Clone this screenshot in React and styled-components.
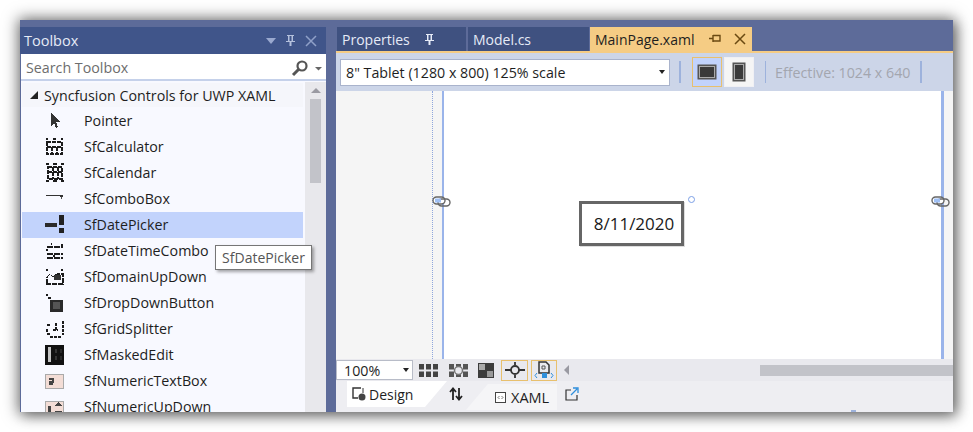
import React from "react";
import styled, { createGlobalStyle } from "styled-components";

const Global = createGlobalStyle`
  html, body { margin: 0; padding: 0; background: #fff; }
  body { font-family: "Open Sans", "Noto Sans", sans-serif; overflow: hidden; }
  #root { width: 973px; height: 432px; padding: 20px; box-sizing: border-box; }
`;
const Win = styled.div`
  width: 933px; height: 392px; display: flex; background: #5d6b99; overflow: hidden;
  box-shadow: 0 0 14px 2px rgba(0,0,0,.5), 4px 4px 12px rgba(0,0,0,.3);
`;
const Wrap = styled.div`position: relative; width: 933px; height: 392px;`;
const Left = styled.div`width: 306px; flex: none; display: flex; flex-direction: column; padding-top: 7px;`;
const TitleBar = styled.div`
  height: 27px; flex: none; background: #40558a; color: #e6ebf7; display: flex; align-items: center;
  padding: 0 9px 0 4px; font-size: 14.5px; justify-content: space-between;
`;
const TitleIcons = styled.div`display: flex; gap: 9px; align-items: center;`;
const Search = styled.div`
  height: 27px; flex: none; box-sizing: border-box; margin: 0 0 0 1px; background: #fff; border-bottom: 2px solid #c5d1ea; display: flex; align-items: center;
  justify-content: space-between; padding: 2px 3px 0 5px; font-size: 14.25px; color: #6d6d6d;
`;
const TreeArea = styled.div`flex: 1; min-height: 0; display: flex; background: #f8f9ff; margin-left: 1px; overflow: hidden; padding-top: 1px;`;
const Tree = styled.div`flex: 1; min-width: 0; padding: 1px 2px 0 1px; overflow: hidden;`;
const Header = styled.div`
  height: 24px; display: flex; align-items: center; background: #f5f6fb; font-size: 14.25px; color: #1e1e1e; padding-left: 8px; gap: 6px; margin-bottom: 1px;
`;
const Row = styled.div`
  height: 26px; box-sizing: border-box; padding-bottom: 1px; flex: none; display: flex; align-items: center; font-size: 14.25px; color: #1e1e1e;
  background: ${p => (p.$selected ? "#c2d3fc" : "transparent")};
`;
const RowIcon = styled.div`width: 62px; flex: none; display: flex; padding-left: 23px; box-sizing: border-box;`;
const Scroll = styled.div`width: 21px; flex: none; background: #e8e8ec; display: flex; flex-direction: column; align-items: center; padding-top: 6px;`;
const ScrollUp = styled.div`width:0; height:0; border-left: 5.5px solid transparent; border-right: 5.5px solid transparent; border-bottom: 5px solid #9a9aa2;`;
const ScrollThumb = styled.div`width: 11px; height: 84px; margin-top: 6px; background: #c2c3c9;`;
const Gap = styled.div`width: 10px; flex: none;`;
const Right = styled.div`flex: 1; min-width: 0; display: flex; flex-direction: column; padding-top: 7px;`;
const Tabs = styled.div`height: 24px; flex: none; display: flex; gap: 2px; padding-left: 1px;`;
const Tab = styled.div`
  width: ${p => p.$w}px; flex: none; box-sizing: border-box; display: flex; align-items: center; gap: 14px; font-size: 14px; padding-left: 5px;
  background: ${p => (p.$active ? "#f5cc84" : "#3f5180")}; color: ${p => (p.$active ? "#1e1e1e" : "#e6ebf7")};
  margin-right: ${p => (p.$tight ? "-1px" : "0")};
`;
const TabIcons = styled.div`display: flex; align-items: center; gap: 12px;`;
const Accent = styled.div`height: 2px; flex: none; background: #f5cc84;`;
const Toolbar = styled.div`
  height: 38px; flex: none; background: #ccd5e8; display: flex; align-items: center; padding-left: 4px; box-sizing: border-box;
`;
const Combo = styled.div`
  width: 330px; height: 27px; box-sizing: border-box; background: #fff; border: 1px solid #a9b3cc; display: flex; align-items: center; justify-content: space-between;
  padding: 0 4px 0 5px; font-size: 14.25px; color: #1e1e1e; flex: none;
`;
const Arrow = styled.span`width:0; height:0; border-left: 3.5px solid transparent; border-right: 3.5px solid transparent; border-top: 4px solid #222; display: inline-block;`;
const Sep = styled.div`width: 1.5px; height: 22px; background: #9db2dc; flex: none; margin: ${p => p.$m};`;
const Toggle = styled.div`
  width: 30px; height: 30px; box-sizing: border-box; flex: none; display: flex; align-items: center; justify-content: center; margin-right: ${p => p.$mr || 0}px;
  background: ${p => (p.$on ? "#c2d3fc" : "#f5f5f5")}; border: 1px solid ${p => (p.$on ? "#e8c06e" : "#f0f0f4")};
`;
const Effective = styled.div`font-size: 14.25px; color: #a3a6af; white-space: nowrap; flex: none; width: 145px;`;
const Canvas = styled.div`flex: 1; min-height: 0; display: flex; background: #f5f5f5; position: relative;`;
const Margin = styled.div`width: 96px; flex: none; border-right: 1px dotted #8fa6dc;`;
const Page = styled.div`
  width: 497px; margin-left: 9px; flex: none; background: #fff; border-left: 2px solid #9ab4ea; border-right: 3px solid #9ab4ea; box-sizing: content-box;
`;
const DateBox = styled.div`
  position: absolute; left: 243px; top: 110px; width: 105px; height: 45px; box-sizing: border-box; border: 3px solid #666; background: #fff;
  display: flex; align-items: center; justify-content: center; padding-left: 5px; font-size: 17px; color: #1a1a1a; box-shadow: 1px 1px 0 #ddd;
`;
const Handle = styled.div`position: absolute; left: 352px; top: 105px; width: 7px; height: 7px; box-sizing: border-box; border: 1.5px solid #7b9fe6; border-radius: 50%; background: #fff;`;
const Link = styled.svg`position: absolute; top: 103px; left: ${p => p.$x}px;`;
const ZoomBar = styled.div`height: 22px; flex: none; background: #e9e9ee; display: flex; align-items: center; position: relative;`;
const ZoomCombo = styled.div`
  width: 77px; height: 20px; flex: none; box-sizing: border-box; background: #fff; border: 1px solid #b8bcc8; display: flex; align-items: center; justify-content: space-between; padding: 0 3px 0 7px; font-size: 14.25px; color: #1e1e1e;
`;
const ToolIcon = styled.div`
  width: ${p => p.$w || 30}px; height: 21px; box-sizing: border-box; flex: none; display: flex; align-items: center; justify-content: center;
  border: ${p => (p.$on ? "1px solid #e8c06e" : "none")}; margin-right: ${p => p.$mr || 0}px;
`;
const HScroll = styled.div`flex: 1; min-width: 0; display: flex; align-items: center; padding-left: 7px;`;
const HArrow = styled.div`width:0; height:0; border-top: 5px solid transparent; border-bottom: 5px solid transparent; border-right: 5px solid #9a9aa2; flex: none;`;
const HThumb = styled.div`height: 11px; width: 193px; background: #c2c3c9; margin-left: auto;`;
const ViewBar = styled.div`height: 31px; flex: none; background: #eeeef2; display: flex; position: relative; padding-left: 11px;`;
const ViewTabA = styled.div`
  width: 100px; height: 26px; background: #fff; flex: none; display: flex; align-items: center; gap: 3px; padding-left: 5px; box-sizing: border-box; font-size: 14px; color: #1e1e1e;
  clip-path: polygon(0 0, 100% 0, 78% 100%, 0 100%);
`;
const SwapIcon = styled.div`width: 22px; flex: none; margin-left: -2px; height: 26px; display: flex; align-items: center; justify-content: center;`;
const ViewTabB = styled.div`
  width: 91px; height: 26px; margin-top: 3px; margin-left: -1px; background: #f5f5f7; flex: none; display: flex; align-items: center; gap: 5px; padding-left: 29px; box-sizing: border-box; font-size: 14.5px; color: #1e1e1e;
  clip-path: polygon(24% 0, 100% 0, 100% 100%, 0 100%);
`;
const Popout = styled.div`margin-left: 8px; height: 26px; display: flex; align-items: center;`;
const Tick = styled.div`position: absolute; left: 515px; bottom: 0; width: 5px; height: 2px; background: #9db2dc;`;
const Tip = styled.div`
  position: absolute; left: 195px; top: 225px; height: 25px; width: 97px; box-sizing: border-box; background: #fff; border: 1px solid #767676; font-size: 14px; color: #555;
  display: flex; align-items: center; justify-content: center; box-shadow: 2px 2px 3px rgba(0,0,0,.35);
`;

const I = ({ children, w = 20, h = 20 }) => <svg width={w} height={h} viewBox={`0 0 ${w} ${h}`} shapeRendering="crispEdges">{children}</svg>;
const k = "#1c1c1c";
const icons = {
  Pointer: <I><path d="M6 2l0 13 3-3 2 5 2-1-2-5 4 0z" fill="#333" /></I>,
  SfCalculator: <I><path d="M1 2h2M8 2h3M16 2h2" stroke={k} strokeWidth="1.5" /><path d="M2 5h15v12H2zM2 10h15M7 10v7M12 10v7" stroke={k} strokeWidth="1.5" strokeDasharray="4 1" fill="none" /></I>,
  SfCalendar: <I><path d="M1 1h3M8 1h4M16 1h3M1 18h3M8 18h4M16 18h3" stroke={k} strokeWidth="1.5" /><path d="M3 4h14v12H3zM3 9h14M8 4v12M13 4v12" stroke={k} strokeWidth="1.5" strokeDasharray="4 1" fill="none" /></I>,
  SfComboBox: <I><path d="M1 6h14" stroke="#333" /><rect x="15" y="6" width="3" height="2" fill="#333" /><rect x="16" y="8" width="1" height="2" fill="#555" /></I>,
  SfDatePicker: <I><rect x="0" y="8" width="12" height="4" fill="#2a2a2a" /><rect x="14" y="0" width="5" height="10" fill="#222" /><rect x="14" y="13" width="5" height="5" fill="#222" /></I>,
  SfDateTimeCombo: <I><path d="M6 3h1M17 3v3M2 6h16M2 8v2M2 13h16M2 17h16M8 15h2" stroke={k} strokeWidth="1.3" strokeDasharray="6 1" fill="none" /></I>,
  SfDomainUpDown: <I><path d="M1 3h2M16 3h2M2 17V10l3-3 3 3 4-3h6v10H2z" stroke={k} strokeWidth="1.3" fill="none" strokeDasharray="5 1" /><rect x="9" y="8" width="7" height="5" fill="#333" /></I>,
  SfDropDownButton: <I><path d="M1 2h2M3 5h3" stroke={k} strokeWidth="1.4" /><rect x="5" y="7" width="13" height="12" fill="#2a2a2a" /><rect x="8" y="9" width="7" height="7" fill="#555" /></I>,
  SfGridSplitter: <I><path d="M2 6h3M2 10v3M2 15h3M5 18h12M17 3h1v13M8 11h5M11 4v7" stroke={k} strokeWidth="1.3" strokeDasharray="3 1" fill="none" /></I>,
  SfMaskedEdit: <I><rect x="0" y="0" width="19" height="20" fill="#111" /><rect x="3" y="2" width="3" height="15" fill="#c4c4c4" /><rect x="10" y="4" width="2" height="4" fill="#333" /><rect x="10" y="11" width="2" height="4" fill="#333" /><rect x="15" y="4" width="2" height="4" fill="#2a2a2a" /><rect x="15" y="11" width="2" height="4" fill="#2a2a2a" /></I>,
  SfNumericTextBox: <I><rect x="0.5" y="3.5" width="18" height="14" fill="#f3ddd6" stroke="#aaa" /><path d="M4 8h4v3H5v2h3" stroke="#444" strokeWidth="1.4" fill="none" /></I>,
  SfNumericUpDown: <I><rect x="0.5" y="4.5" width="18" height="16" fill="#f3ddd6" stroke="#aaa" /><rect x="3" y="9" width="3" height="8" fill="#444" /><path d="M9 9l4-4 5 4zM9 14l4 4 5-4z" fill="#444" /></I>,
};
const rows = Object.keys(icons);

const Pin = ({ c = "#e6ebf7" }) => <svg width="11" height="13" viewBox="0 0 11 13"><path d="M2 1h7v1H8v5h2v1H6.5v4h-2V8H1V7h2V2H2zM4.5 2v5h2V2z" fill={c} /></svg>;
const PinSide = () => <svg width="14" height="12" viewBox="0 0 14 12"><path d="M1 5.5h4M5 2v7M5 2.5h7v5.5H5" stroke="#6b4a12" strokeWidth="1.4" fill="none" /></svg>;
const X = ({ c, s = 12 }) => <svg width={s} height={s} viewBox="0 0 12 12"><path d="M1 1l10 10M11 1L1 11" stroke={c} strokeWidth="1.5" /></svg>;
const LinkShape = ({ x }) => (
  <Link $x={x} width="20" height="14" viewBox="0 0 20 14">
    <rect x="1" y="3" width="12" height="7" rx="3.5" fill="#fff" stroke="#666" strokeWidth="1.4" />
    <rect x="6" y="5" width="12" height="7" rx="3.5" fill="none" stroke="#666" strokeWidth="1.4" />
    <rect x="3" y="4.5" width="6" height="4" fill="#9fc0f5" />
  </Link>
);

export default function App() {
  return (
    <>
      <Global />
      <Wrap>
        <Win>
          <Left>
            <TitleBar>
              Toolbox
              <TitleIcons>
                <svg width="10" height="6" viewBox="0 0 10 6"><path d="M0 0h10L5 6z" fill="#9aa9cf" /></svg>
                <Pin c="#b4c0dc" />
                <X c="#8fa0c8" />
              </TitleIcons>
            </TitleBar>
            <Search>
              Search Toolbox
              <svg width="32" height="18" viewBox="0 0 32 18"><circle cx="11" cy="7" r="4.5" fill="none" stroke="#555" strokeWidth="2.2" /><path d="M7.5 10.5l-5.5 5.5" stroke="#555" strokeWidth="3" /><path d="M24 8h7l-3.5 3.5z" fill="#666" /></svg>
            </Search>
            <TreeArea>
              <Tree>
                <Header>
                  <svg width="8" height="8" viewBox="0 0 8 8"><path d="M8 0v8H0z" fill="#222" /></svg>
                  Syncfusion Controls for UWP XAML
                </Header>
                {rows.map(n => (
                  <Row key={n} $selected={n === "SfDatePicker"}>
                    <RowIcon>{icons[n]}</RowIcon>
                    {n}
                  </Row>
                ))}
              </Tree>
              <Scroll><ScrollUp /><ScrollThumb /></Scroll>
            </TreeArea>
          </Left>
          <Gap />
          <Right>
            <Tabs>
              <Tab $w={129}>Properties <Pin c="#e6ebf7" /></Tab>
              <Tab $w={121} $tight>Model.cs</Tab>
              <Tab $w={162} $active>
                MainPage.xaml
                <TabIcons><PinSide /><X c="#6b4a12" /></TabIcons>
              </Tab>
            </Tabs>
            <Accent />
            <Toolbar>
              <Combo>8" Tablet (1280 x 800) 125% scale<Arrow /></Combo>
              <Sep $m="0 11px 0 9px" />
              <Toggle $on $mr={2}><svg width="20" height="16" viewBox="0 0 20 16"><rect x="0.5" y="0.5" width="19" height="15" fill="#555" /><rect x="2" y="2" width="16" height="12" fill="#aaa" /><rect x="3" y="3" width="14" height="10" fill="#3a3a3a" /></svg></Toggle>
              <Toggle><svg width="14" height="20" viewBox="0 0 14 20"><rect x="0.5" y="0.5" width="13" height="19" fill="#555" /><rect x="2" y="2" width="10" height="16" fill="#aaa" /><rect x="3" y="3" width="8" height="14" fill="#3a3a3a" /></svg></Toggle>
              <Sep $m="0 9px 0 11px" />
              <Effective>Effective: 1024 x 640</Effective>
              <Sep />
            </Toolbar>
            <Canvas>
              <Margin />
              <Page />
              <DateBox>8/11/2020</DateBox>
              <Handle />
              <LinkShape x={96} />
              <LinkShape x={595} />
            </Canvas>
            <ZoomBar>
              <ZoomCombo>100%<Arrow /></ZoomCombo>
              <ToolIcon><svg width="19" height="13" viewBox="0 0 19 13" fill="#444"><rect width="5" height="5.5" /><rect x="7" width="5" height="5.5" /><rect x="14" width="5" height="5.5" /><rect y="7.5" width="5" height="5.5" /><rect x="7" y="7.5" width="5" height="5.5" /><rect x="14" y="7.5" width="5" height="5.5" /></svg></ToolIcon>
              <ToolIcon><svg width="19" height="13" viewBox="0 0 19 13" fill="#555"><rect width="5" height="5.5" /><rect x="7" width="5" height="5.5" /><rect x="14" width="5" height="5.5" /><rect y="7.5" width="5" height="5.5" /><rect x="7" y="7.5" width="5" height="5.5" /><rect x="14" y="7.5" width="5" height="5.5" /><circle cx="9.5" cy="6.5" r="4" fill="#e9e9ee" stroke="#777" strokeWidth="1.5" /></svg></ToolIcon>
              <ToolIcon $w={26} $mr={2}><svg width="16" height="15" viewBox="0 0 16 15"><rect width="16" height="15" fill="#3c3c3c" /><rect x="1" y="1" width="6" height="6" fill="#aaa" /><rect x="9" y="8" width="6" height="6" fill="#999" /></svg></ToolIcon>
              <ToolIcon $on $w={27} $mr={3}><svg width="20" height="16" viewBox="0 0 20 16"><path d="M0 8h6M14 8h6M10 0v3M10 13v3" stroke="#333" strokeWidth="1.8" /><circle cx="10" cy="8" r="4" fill="none" stroke="#333" strokeWidth="1.8" /></svg></ToolIcon>
              <ToolIcon $on $w={26}><svg width="20" height="18" viewBox="0 0 20 18"><path d="M5 1h7l3 3v8H5z" fill="none" stroke="#333" strokeWidth="1.5" /><path d="M8 5h3v3H8z" fill="none" stroke="#555" /><rect x="8" y="12" width="5" height="5" fill="#2f8fdc" /><path d="M3 12l-2 2.5 2 2.5M17 12l2 2.5-2 2.5" stroke="#2f8fdc" fill="none" /></svg></ToolIcon>
              <HScroll><HArrow /><HThumb /></HScroll>
            </ZoomBar>
            <ViewBar>
              <ViewTabA>
                <svg width="14" height="14" viewBox="0 0 14 14"><path d="M9 1H1v10h5" fill="none" stroke="#333" strokeWidth="1.4" /><path d="M11 1v5" stroke="#333" strokeWidth="1" /><circle cx="10" cy="10" r="3.5" fill="#444" /></svg>
                Design
              </ViewTabA>
              <SwapIcon><svg width="14" height="14" viewBox="0 0 14 14"><path d="M4 13V3M1 5l3-3.5L7 5M10 1v10M7 9l3 3.5L13 9" stroke="#222" strokeWidth="1.8" fill="none" /></svg></SwapIcon>
              <ViewTabB>
                <svg width="11" height="11" viewBox="0 0 11 11"><rect x="0.5" y="0.5" width="10" height="10" fill="#fff" stroke="#444" /><path d="M4.5 4L3 5.5 4.5 7M6.5 4L8 5.5 6.5 7" stroke="#555" fill="none" strokeWidth=".8" /></svg>
                XAML
              </ViewTabB>
              <Popout><svg width="14" height="14" viewBox="0 0 14 14"><path d="M6 3H1v10h11V8" fill="none" stroke="#333" strokeWidth="1.2" /><path d="M6 8l6-6M8 1h5v5" stroke="#2f8fdc" strokeWidth="1.3" fill="none" /></svg></Popout>
              <Tick />
            </ViewBar>
          </Right>
        </Win>
        <Tip>SfDatePicker</Tip>
      </Wrap>
    </>
  );
}
